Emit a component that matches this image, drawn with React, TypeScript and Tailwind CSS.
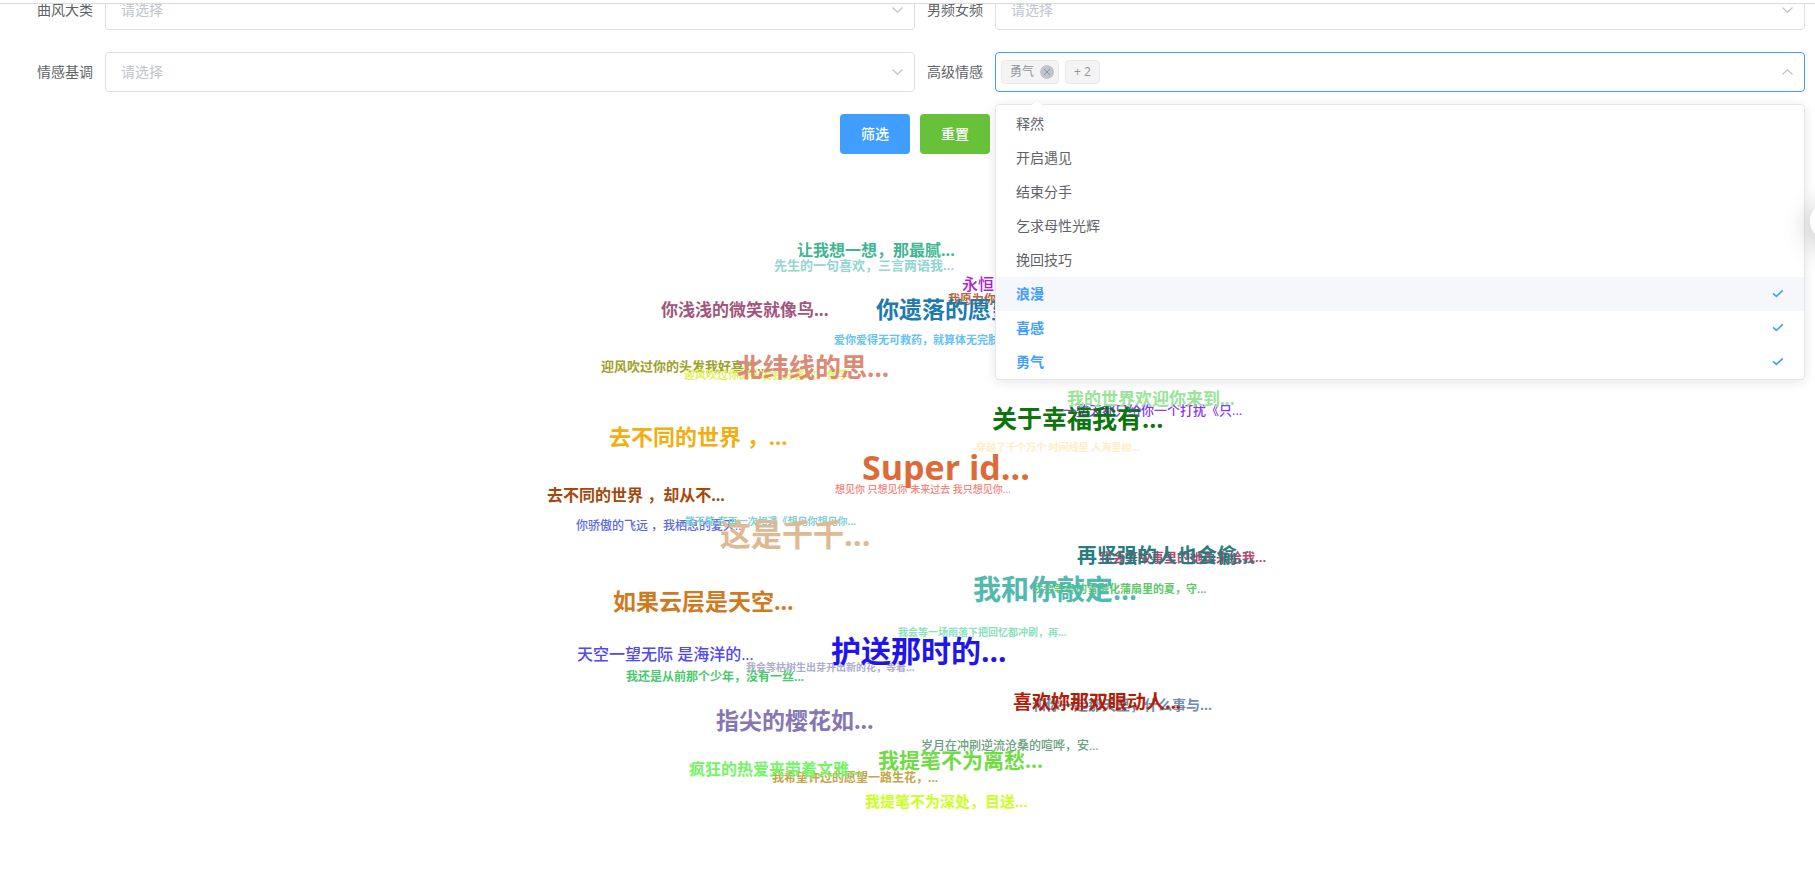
import { useState } from "react";

type Word = { text: string; x: number; y: number; size: number; color: string; light?: boolean };

// x: left edge, y: vertical centre, both measured inside the cloud canvas.
const words: Word[] = [
  { text: "让我想一想，那最腻...", x: 270, y: 50, size: 16, color: "#40b592" },
  { text: "先生的一句喜欢，三言两语我...", x: 247, y: 66, size: 13, color: "#92d6cf" },
  { text: "永恒的爱只为你...", x: 435, y: 84, size: 16, color: "#ae1fd8", light: true },
  { text: "我愿为你写一首歌...", x: 421, y: 100, size: 12, color: "#bd6437" },
  { text: "你遗落的愿望...", x: 349, y: 110, size: 23, color: "#1d7bae" },
  { text: "你浅浅的微笑就像鸟...", x: 134, y: 110, size: 17, color: "#a0567a" },
  { text: "爱你爱得无可救药，就算体无完肤我...", x: 307, y: 140, size: 11, color: "#66c1f5" },
  { text: "迎风吹过你的头发我好喜欢...", x: 74, y: 167, size: 13, color: "#a0a02a" },
  { text: "迎风吹过你的头发我好喜欢，像学...", x: 157, y: 175, size: 11, color: "#e4f060" },
  { text: "北纬线的思...", x: 210, y: 167, size: 26, color: "#dc8a76" },
  { text: "去不同的世界 ，...", x: 82, y: 236, size: 22, color: "#f2ae11" },
  { text: "去不同的世界 ，却从不...", x: 20, y: 295, size: 16, color: "#a6480c" },
  { text: "你骄傲的飞远 ，我栖息的夏天...", x: 49, y: 326, size: 12, color: "#5a68e6", light: true },
  { text: "能不能 在再一次相遇《想见你想见你...", x: 158, y: 321, size: 10, color: "#80d0d5" },
  { text: "这是千千...", x: 193, y: 335, size: 31, color: "#e0b892" },
  { text: "一整天都只给你一个打扰《只...", x: 536, y: 211, size: 13, color: "#8833ff", light: true },
  { text: "我的世界欢迎你来到...", x: 540, y: 199, size: 17, color: "#98e598" },
  { text: "关于幸福我有...", x: 465, y: 219, size: 25, color: "#0d750d" },
  { text: "穿越了千个万个 时间线里 人海里相...", x: 449, y: 247, size: 10, color: "#ffedc4" },
  { text: "想见你 只想见你 未来过去 我只想见你...", x: 308, y: 289, size: 10, color: "#f5847e", light: true },
  { text: "Super id...", x: 335, y: 267, size: 34, color: "#dd6b39" },
  { text: "我会等故事里的她再来给我...", x: 572, y: 358, size: 13, color: "#b0486b" },
  { text: "再坚强的人也会偷...", x: 550, y: 356, size: 20, color: "#267e80" },
  { text: "我会等冬的雪融化蒲扇里的夏，守...", x: 505, y: 389, size: 11, color: "#5dc866" },
  { text: "我和你敲定...", x: 446, y: 389, size: 28, color: "#52b9ae" },
  { text: "我会等一场雨落下把回忆都冲刷，再...", x: 371, y: 432, size: 10, color: "#8be2bf" },
  { text: "我会等枯树生出芽开出新的花，等着...", x: 219, y: 467, size: 10, color: "#adabd0" },
  { text: "护送那时的...", x: 304, y: 451, size: 30, color: "#2215ea" },
  { text: "和你一起那天里，什么事与...", x: 505, y: 505, size: 14, color: "#6f8faf" },
  { text: "喜欢妳那双眼动人...", x: 486, y: 503, size: 19, color: "#b51c05" },
  { text: "如果云层是天空...", x: 86, y: 402, size: 23, color: "#cf7a1f" },
  { text: "天空一望无际 是海洋的...", x: 50, y: 454, size: 16, color: "#5048f0", light: true },
  { text: "我还是从前那个少年，没有一丝...", x: 99, y: 477, size: 12, color: "#4ac96c" },
  { text: "指尖的樱花如...", x: 189, y: 521, size: 23, color: "#8676b4" },
  { text: "岁月在冲刷逆流沧桑的喧哗，安...", x: 394, y: 546, size: 12, color: "#66a07c", light: true },
  { text: "我希望许过的愿望一路生花，...", x: 245, y: 578, size: 12, color: "#c5a548" },
  { text: "疯狂的热爱夹带着文雅...", x: 162, y: 569, size: 16, color: "#74f566" },
  { text: "我提笔不为离愁...", x: 351, y: 561, size: 21, color: "#6fdc44" },
  { text: "我提笔不为深处，目送...", x: 338, y: 602, size: 15, color: "#ccff22" },
];

const moods = ["释然", "开启遇见", "结束分手", "乞求母性光辉", "挽回技巧", "浪漫", "喜感", "勇气"];

function Chevron({ up = false }: { up?: boolean }) {
  return (
    <svg
      className="pointer-events-none absolute top-1/2 right-3 h-[6px] w-[11px] -translate-y-1/2"
      viewBox="0 0 11 6"
      fill="none"
      stroke="#c0c4cc"
      strokeWidth="1.2"
      aria-hidden="true"
    >
      <path d={up ? "M0.5 5.5 5.5 0.7 10.5 5.5" : "M0.5 0.5 5.5 5.3 10.5 0.5"} />
    </svg>
  );
}

function SelectField({ id, label }: { id: string; label: string }) {
  return (
    <div className="flex h-10 items-center">
      <label htmlFor={id} className="w-20 shrink-0 pr-3 text-right text-[#606266]">
        {label}
      </label>
      <div className="relative flex-1">
        <select
          id={id}
          defaultValue=""
          className="block h-10 w-full appearance-none rounded border border-[#dcdfe6] bg-white px-[15px] text-[#c0c4cc] outline-none focus:border-[#409eff]"
        >
          <option value="">请选择</option>
        </select>
        <Chevron />
      </div>
    </div>
  );
}

function MoodField() {
  const [picked, setPicked] = useState<string[]>(["勇气", "喜感", "浪漫"]);
  const toggle = (m: string) =>
    setPicked((p) => (p.includes(m) ? p.filter((v) => v !== m) : [...p, m]));

  return (
    <div className="flex h-10 items-center">
      <label htmlFor="mood" className="w-20 shrink-0 pr-3 text-right text-[#606266]">
        高级情感
      </label>
      <div className="relative flex-1">
        <div className="flex h-10 items-center gap-[6px] rounded border border-[#409eff] bg-white pr-8 pl-[5px] text-xs text-[#909399]">
          {picked.length > 0 && (
            <span className="flex h-6 items-center gap-[6px] rounded border border-[#e9e9eb] bg-[#f4f4f5] pr-1 pl-2">
              {picked[0]}
              <button
                type="button"
                aria-label={`移除${picked[0]}`}
                onClick={() => toggle(picked[0])}
                className="flex h-[14px] w-[14px] items-center justify-center rounded-full bg-[#c0c4cc]"
              >
                <svg viewBox="0 0 8 8" className="h-2 w-2" stroke="#909399" aria-hidden="true">
                  <path d="M1 1 7 7M7 1 1 7" />
                </svg>
              </button>
            </span>
          )}
          {picked.length > 1 && (
            <span className="flex h-6 items-center rounded border border-[#e9e9eb] bg-[#f4f4f5] px-2">
              + {picked.length - 1}
            </span>
          )}
          <input
            id="mood"
            role="combobox"
            aria-expanded="true"
            aria-controls="mood-list"
            readOnly
            className="h-7 min-w-0 flex-1 bg-transparent outline-none"
          />
        </div>
        <Chevron up />
        <div className="absolute inset-x-0 top-[52px] z-10 rounded border border-[#e4e7ed] bg-white pt-[2px] shadow-[0_2px_12px_rgba(0,0,0,0.1)]">
          <svg
            className="absolute -top-[6px] left-[35px] h-[7px] w-3"
            viewBox="0 0 12 7"
            fill="#fff"
            stroke="#ebeef5"
            aria-hidden="true"
          >
            <path d="M0 6.5 6 0.7 12 6.5" />
            <path d="M1 6.5H11" stroke="#fff" />
          </svg>
          <ul id="mood-list" role="listbox" aria-multiselectable="true" aria-label="高级情感">
            {moods.map((m) => {
              const on = picked.includes(m);
              return (
                <li
                  key={m}
                  role="option"
                  aria-selected={on}
                  onClick={() => toggle(m)}
                  className={`flex h-[34px] cursor-pointer items-center justify-between px-5 ${
                    on ? "font-bold text-[#409eff]" : "text-[#606266]"
                  } ${m === "浪漫" ? "bg-[#f5f7fa]" : ""}`}
                >
                  {m}
                  {on && (
                    <svg
                      viewBox="0 0 12 12"
                      className="h-3 w-3"
                      fill="none"
                      stroke="#409eff"
                      strokeWidth="1.6"
                      aria-hidden="true"
                    >
                      <path d="M1 5.4 4.4 8.4 10.8 2.4" />
                    </svg>
                  )}
                </li>
              );
            })}
          </ul>
        </div>
      </div>
    </div>
  );
}

function WordCloud() {
  return (
    <div className="relative mx-auto mt-[46px] h-[640px] w-[761px]">
      {words.map((w) => (
        <span
          key={w.text}
          className={`absolute leading-none whitespace-nowrap ${w.light ? "font-medium" : "font-bold"}`}
          style={{ left: w.x, top: w.y - Math.round(w.size / 2), fontSize: w.size, color: w.color }}
        >
          {w.text}
        </span>
      ))}
    </div>
  );
}

export default function App() {
  return (
    <div className="min-h-screen overflow-hidden bg-white font-['Open_Sans','Noto_Sans_CJK_SC',sans-serif] text-sm">
      <header className="relative z-10 h-1 border-b border-[#dcdcdc] bg-white" />
      <form className="-mt-[14px] pr-[10px] pl-[25px]" onSubmit={(e) => e.preventDefault()}>
        <div className="grid grid-cols-2 gap-y-[22px]">
          <SelectField id="style" label="曲风大类" />
          <SelectField id="channel" label="男频女频" />
          <SelectField id="tone" label="情感基调" />
          <MoodField />
        </div>
        <div className="mt-[22px] flex justify-center gap-[10px] font-medium text-white">
          <button type="submit" className="h-10 rounded bg-[#409eff] px-[21px]">
            筛选
          </button>
          <button type="reset" className="h-10 rounded bg-[#67c23a] px-[21px]">
            重置
          </button>
        </div>
      </form>
      <WordCloud />
      <button
        type="button"
        aria-label="展开侧栏"
        className="fixed top-[201px] -right-[35px] z-20 h-10 w-10 rounded-full bg-white shadow-[0_6px_28px_rgba(0,0,0,0.28)]"
      />
    </div>
  );
}
